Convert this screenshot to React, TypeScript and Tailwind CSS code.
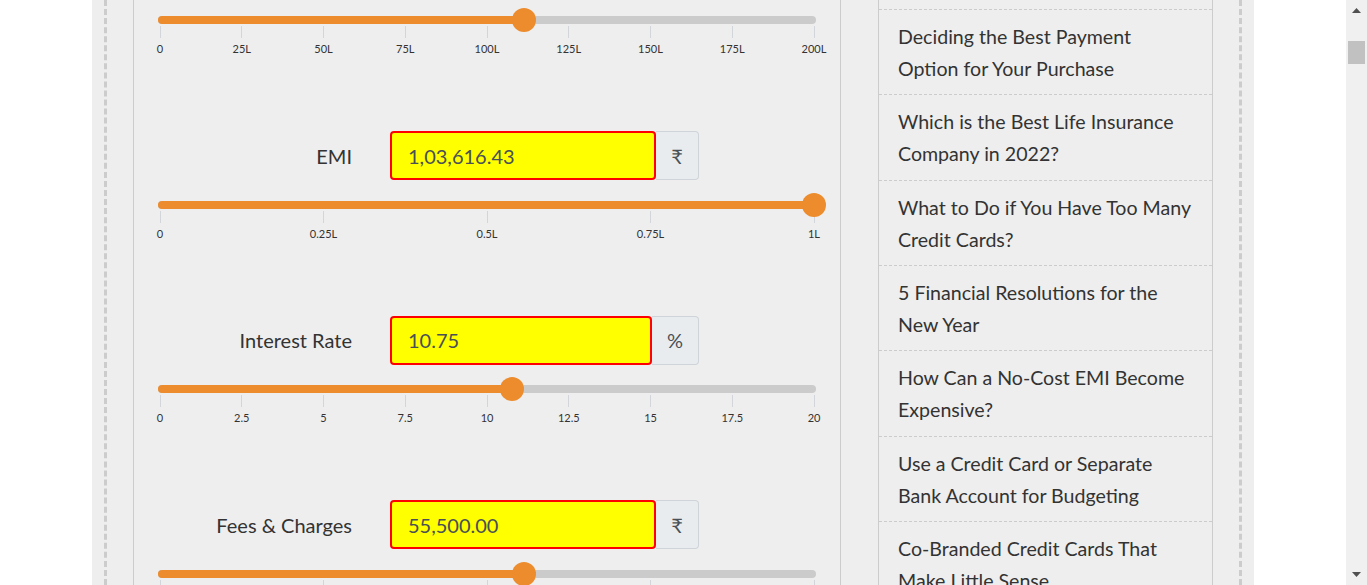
const orange = "#ed8c2d";

type Field = {
  label: string;
  value: string;
  unit: string;
  pct: number;
  ticks: string[];
};

const loanTicks = ["0", "25L", "50L", "75L", "100L", "125L", "150L", "175L", "200L"];

const fields: Field[] = [
  { label: "EMI", value: "1,03,616.43", unit: "₹", pct: 1, ticks: ["0", "0.25L", "0.5L", "0.75L", "1L"] },
  {
    label: "Interest Rate",
    value: "10.75",
    unit: "%",
    pct: 0.5375,
    ticks: ["0", "2.5", "5", "7.5", "10", "12.5", "15", "17.5", "20"],
  },
  { label: "Fees & Charges", value: "55,500.00", unit: "₹", pct: 0.557, ticks: ["0", "0.25L", "0.5L", "0.75L", "1L"] },
];

const posts = [
  ["Deciding the Best Payment", "Option for Your Purchase"],
  ["Which is the Best Life Insurance", "Company in 2022?"],
  ["What to Do if You Have Too Many", "Credit Cards?"],
  ["5 Financial Resolutions for the", "New Year"],
  ["How Can a No-Cost EMI Become", "Expensive?"],
  ["Use a Credit Card or Separate", "Bank Account for Budgeting"],
  ["Co-Branded Credit Cards That", "Make Little Sense"],
];

function Slider({ pct, ticks }: { pct: number; ticks: string[] }) {
  const at = `calc(2px + ${pct} * (100% - 4px))`;
  return (
    <div className="mx-px">
      <div className="relative h-2 rounded-full bg-[#cbcbcb]">
        <div className="h-2 rounded-full bg-[#ed8c2d]" style={{ width: at }} />
        <div
          className="absolute top-1/2 size-6 -translate-x-1/2 -translate-y-1/2 rounded-full"
          style={{ left: at, backgroundColor: orange }}
        />
      </div>
      <div className="mx-[2px] mt-[2px] flex justify-between">
        {ticks.map((t) => (
          <div key={t} className="flex w-0 flex-col items-center">
            <div className="h-3 w-px shrink-0 bg-[#d2d6da]" />
            <div className="mt-1 whitespace-nowrap text-[11px] leading-[14px] text-[#333]">{t}</div>
          </div>
        ))}
      </div>
    </div>
  );
}

function Row({ field }: { field: Field }) {
  return (
    <div className="mt-[75px] flex items-center">
      <div className="w-[233px] pr-[38px] text-right text-[20px] text-[#333]">{field.label}</div>
      <div className="flex h-[49px] w-[309px]">
        <div className="flex flex-1 items-center rounded-[4px] border-2 border-[#ff0000] bg-[#ffff00] pl-4 text-[20px] text-[#495057]">
          {field.value}
        </div>
        <div
          className={`flex items-center justify-center rounded-r-[4px] border border-l-0 border-[#ced4da] bg-[#e9ecef] text-[20px] text-[#495057] ${
            field.unit === "%" ? "w-[47px]" : "w-[43px]"
          }`}
        >
          {field.unit}
        </div>
      </div>
    </div>
  );
}

function Arrow({ down }: { down?: boolean }) {
  return (
    <div className="flex h-[21px] items-center justify-center">
      <svg width="9" height="5" viewBox="0 0 9 5" className={down ? "rotate-180" : ""}>
        <path d="M4.5 0 L9 5 L0 5 Z" fill="#505050" />
      </svg>
    </div>
  );
}

export default function App() {
  return (
    <div className="flex h-[585px] w-full overflow-hidden bg-white font-[Lato,'Liberation_Sans',sans-serif]">
      <div className="h-full flex-1 overflow-hidden">
        <div className="mx-auto h-full w-[1162px] bg-[#eeeeee] px-3">
          <div className="flex h-full gap-[37px] border-x-[3px] border-dashed border-[#cccccc] px-[26px]">
            <div className="h-full w-[708px] shrink-0 border-x border-[#cccccc] px-[23px] pt-4">
              <Slider pct={0.557} ticks={loanTicks} />
              {fields.map((f) => (
                <div key={f.label}>
                  <Row field={f} />
                  <div className="mt-[20.5px]">
                    <Slider pct={f.pct} ticks={f.ticks} />
                  </div>
                </div>
              ))}
            </div>
            <div className="h-full w-[335px] shrink-0 border-x border-[#cccccc]">
              <div className="h-[10px] border-b border-dashed border-[#cccccc]" />
              {posts.map((p) => (
                <div
                  key={p[0]}
                  className="border-b border-dashed border-[#cccccc] pb-[9.33px] pl-[19px] pt-[11px] text-[19.6px] leading-[32px] text-[#333]"
                >
                  <div className="whitespace-nowrap">{p[0]}</div>
                  <div className="whitespace-nowrap">{p[1]}</div>
                </div>
              ))}
            </div>
          </div>
        </div>
      </div>
      <div className="flex h-full w-[21px] flex-col bg-[#f0f0f0]">
        <Arrow />
        <div className="mx-[2px] mt-5 h-[23px] bg-[#c1c1c1]" />
        <div className="flex-1" />
        <Arrow down />
      </div>
    </div>
  );
}
